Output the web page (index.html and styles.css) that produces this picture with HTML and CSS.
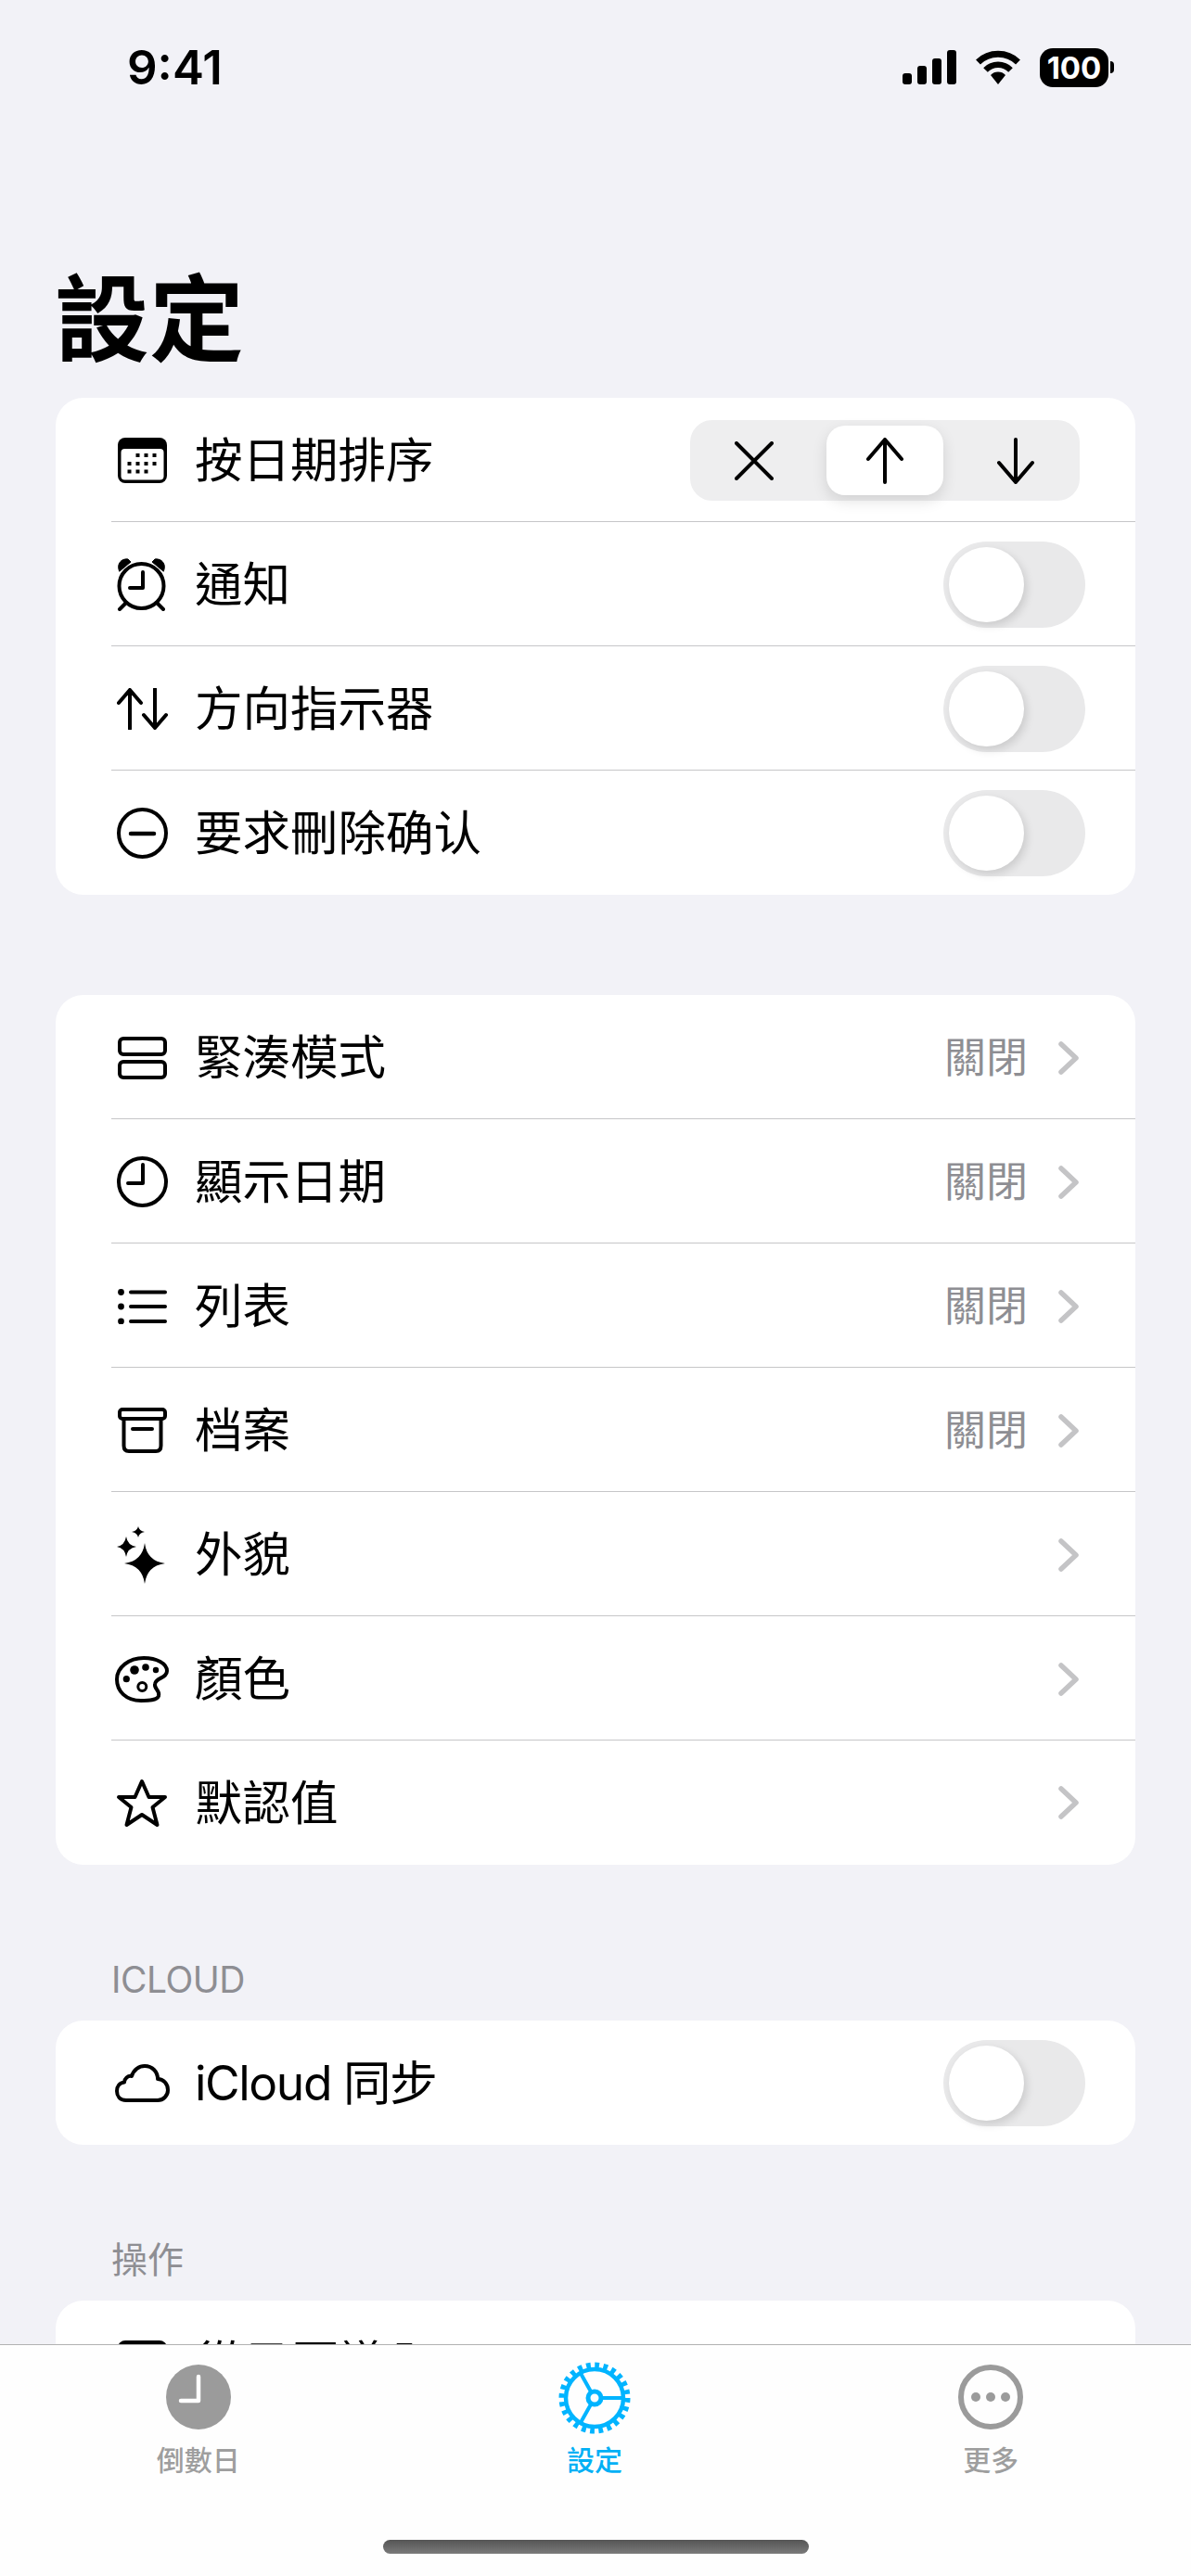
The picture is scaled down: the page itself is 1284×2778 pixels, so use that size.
FILE: index.html
```
<!DOCTYPE html>
<html lang="zh-Hant">
<head>
<meta charset="utf-8">
<title>設定</title>
<link rel="stylesheet" href="styles.css">
</head>
<body>
<div class="screen">
  <div class="viewport">
    <header class="status">
      <span class="time">9:41</span>
      <div class="status-icons">
        <svg class="sig" width="59" height="37" viewBox="0 0 59 37"><rect x="0" y="25" width="10" height="12" rx="3"/><rect x="16" y="17" width="10" height="20" rx="3"/><rect x="32" y="9" width="10" height="28" rx="3"/><rect x="48" y="0" width="10" height="37" rx="3"/></svg>
        <svg class="wifi" width="52" height="37" viewBox="0 0 52 37"><path d="M26 37 18 27A11 11 0 0 1 34 27Z"/><path d="M12.5 21.5A19 19 0 0 1 39.500 21.500" fill="none" stroke="#000" stroke-width="6.500"/><path d="M4.500 13A31 31 0 0 1 47.500 13" fill="none" stroke="#000" stroke-width="7"/></svg>
        <div class="battery"><span class="batt-body">100</span><span class="batt-nub"></span></div>
      </div>
    </header>
    <main class="content">
      <h1 class="title">設定</h1>

      <section class="card">
        <div class="row"><div class="row-in">
          <span class="ico"><svg width="53" height="49" viewBox="0 0 53 49"><rect width="53" height="49" rx="8"/><rect x="3.500" y="12" width="46" height="33.500" rx="4" fill="#fff"/><g><rect x="19.500" y="17" width="4" height="4"/><rect x="28.500" y="17" width="4" height="4"/><rect x="37.500" y="17" width="4" height="4"/><rect x="10.500" y="26" width="4" height="4"/><rect x="19.500" y="26" width="4" height="4"/><rect x="28.500" y="26" width="4" height="4"/><rect x="37.500" y="26" width="4" height="4"/><rect x="10.500" y="34.500" width="4" height="4"/><rect x="19.500" y="34.500" width="4" height="4"/><rect x="28.500" y="34.500" width="4" height="4"/></g></svg></span>
          <span class="label">按日期排序</span>
          <div class="seg">
            <span class="seg-btn"><svg width="42" height="42" viewBox="0 0 42 42" class="line"><path d="M2 2 40 40M40 2 2 40"/></svg></span>
            <span class="seg-btn on"><svg width="40" height="50" viewBox="0 0 40 50" class="line"><path d="M20 48V2M2 23 20 2 38 23"/></svg></span>
            <span class="seg-btn"><svg width="40" height="50" viewBox="0 0 40 50" class="line"><path d="M20 2V48M2 27 20 48 38 27"/></svg></span>
          </div>
        </div></div>
        <div class="row"><div class="row-in">
          <span class="ico"><svg width="54" height="57" viewBox="0 0 54 57" class="line"><circle cx="26.500" cy="30" r="24"/><path d="M28 15V32H14"/><path d="M9 49 3 55M44 49 50 55"/><path d="M2 12C0 5 6 0 12 1L15 4 3 14Z" class="solid"/><path d="M51 12C53 5 47 0 41 1L38 4 50 14Z" class="solid"/></svg></span>
          <span class="label">通知</span>
          <span class="toggle"><span class="knob"></span></span>
        </div></div>
        <div class="row"><div class="row-in">
          <span class="ico"><svg width="55" height="45" viewBox="0 0 55 45" class="line"><path d="M14 44V2M2 16 14 2 26 16M41 1V43M29 29 41 43 53 29"/></svg></span>
          <span class="label">方向指示器</span>
          <span class="toggle"><span class="knob"></span></span>
        </div></div>
        <div class="row"><div class="row-in">
          <span class="ico"><svg width="55" height="55" viewBox="0 0 55 55" class="line"><circle cx="27.500" cy="27.500" r="25.500"/><path d="M15 28H40" class="thick"/></svg></span>
          <span class="label">要求刪除确认</span>
          <span class="toggle"><span class="knob"></span></span>
        </div></div>
      </section>

      <section class="card card-gap">
        <div class="row"><div class="row-in">
          <span class="ico"><svg width="53" height="46" viewBox="0 0 53 46" class="line"><rect x="2" y="2" width="49" height="17" rx="4"/><rect x="2" y="27" width="49" height="17" rx="4"/></svg></span>
          <span class="label">緊湊模式</span>
          <span class="value">關閉</span><svg class="chev" width="22" height="36" viewBox="0 0 22 36"><path d="M3 3 19 18 3 33"/></svg>
        </div></div>
        <div class="row"><div class="row-in">
          <span class="ico"><svg width="55" height="55" viewBox="0 0 55 55" class="line"><circle cx="27.500" cy="27.500" r="25.500"/><path d="M28 9V29H12"/></svg></span>
          <span class="label">顯示日期</span>
          <span class="value">關閉</span><svg class="chev" width="22" height="36" viewBox="0 0 22 36"><path d="M3 3 19 18 3 33"/></svg>
        </div></div>
        <div class="row"><div class="row-in">
          <span class="ico"><svg width="53" height="38" viewBox="0 0 53 38" class="line"><path d="M14 3.500H51M14 19H51M14 35H51"/><circle class="solid none" cx="3.500" cy="3.500" r="3.400"/><circle class="solid none" cx="3.500" cy="19" r="3.400"/><circle class="solid none" cx="3.500" cy="35" r="3.400"/></svg></span>
          <span class="label">列表</span>
          <span class="value">關閉</span><svg class="chev" width="22" height="36" viewBox="0 0 22 36"><path d="M3 3 19 18 3 33"/></svg>
        </div></div>
        <div class="row"><div class="row-in">
          <span class="ico"><svg width="53" height="49" viewBox="0 0 53 49" class="line"><rect x="2" y="2" width="49" height="10" rx="3"/><path d="M6.500 12V41C6.500 45 8.500 47 12 47H41C44.500 47 46.500 45 46.500 41V12M16 23H37"/></svg></span>
          <span class="label">档案</span>
          <span class="value">關閉</span><svg class="chev" width="22" height="36" viewBox="0 0 22 36"><path d="M3 3 19 18 3 33"/></svg>
        </div></div>
        <div class="row"><div class="row-in">
          <span class="ico"><svg width="54" height="62" viewBox="0 0 54 62"><path d="M30 18Q32.500 37.500 52 40 32.500 42.500 30 62 27.500 42.500 8 40 27.500 37.500 30 18Z"/><path d="M10 11Q11.500 20.500 21 22 11.500 23.500 10 33 8.500 23.500 0 22 8.500 20.500 10 11Z"/><path d="M23 0Q24 5 30 6 24 7 23 12 22 7 16 6 22 5 23 0Z"/></svg></span>
          <span class="label">外貌</span>
          <svg class="chev" width="22" height="36" viewBox="0 0 22 36"><path d="M3 3 19 18 3 33"/></svg>
        </div></div>
        <div class="row"><div class="row-in">
          <span class="ico"><svg width="58" height="50" viewBox="0 0 58 50" class="line"><path d="M31 2C45 2 56 8 56 16 56 24 44 23 43 30 42 36 49 37 47 43 45 48 36 48 28 48 12 48 2 38 2 25 2 12 15 2 31 2Z"/><circle class="solid none" cx="21" cy="15" r="4.800"/><circle class="solid none" cx="33" cy="12" r="3.800"/><circle class="solid none" cx="44" cy="15" r="3.200"/><circle class="solid none" cx="12.300" cy="24.700" r="3.600"/><circle cx="29.300" cy="33" r="4.500" class="ring"/></svg></span>
          <span class="label">顏色</span>
          <svg class="chev" width="22" height="36" viewBox="0 0 22 36"><path d="M3 3 19 18 3 33"/></svg>
        </div></div>
        <div class="row"><div class="row-in">
          <span class="ico"><svg width="56" height="53" viewBox="0 0 56 53" class="line"><path d="M28 3 35.500 20H53L39.500 31 44.500 50 28 39 11.500 50 16.500 31 3 20H20.500Z"/></svg></span>
          <span class="label">默認值</span>
          <svg class="chev" width="22" height="36" viewBox="0 0 22 36"><path d="M3 3 19 18 3 33"/></svg>
        </div></div>
      </section>

      <h2 class="sec-head sec-latin">ICLOUD</h2>
      <section class="card">
        <div class="row"><div class="row-in">
          <span class="ico"><svg width="59" height="41" viewBox="0 0 59 41" class="line"><path d="M12 39C5 39 2 34 2 29 2 24 5 20 10 19.500 10 16 14 12 18 13 20 6 26 2 32 2 40 2 46 8 46 16 52 16 57 21 57 28 57 34 52 39 46 39Z"/></svg></span>
          <span class="label label-latin">iCloud 同步</span>
          <span class="toggle"><span class="knob"></span></span>
        </div></div>
      </section>

      <h2 class="sec-head">操作</h2>
      <section class="card">
        <div class="row"><div class="row-in">
          <span class="ico"><svg width="53" height="49" viewBox="0 0 53 49"><rect width="53" height="49" rx="8"/><rect x="3.500" y="12" width="46" height="33.500" rx="4" fill="#fff"/></svg></span>
          <span class="label">從日曆導入</span>
        </div></div>
      </section>
    </main>
  </div>

  <nav class="tabbar">
    <div class="tabs">
      <div class="tab">
        <svg width="70" height="70" viewBox="0 0 70 70"><circle cx="35" cy="35" r="35" fill="#9b9b9b"/><path d="M35 13V39H16" fill="none" stroke="#fff" stroke-width="4.500" stroke-linecap="round" stroke-linejoin="round"/></svg>
        <span class="tab-label">倒數日</span>
      </div>
      <div class="tab active">
        <svg width="78" height="78" viewBox="0 0 78 78" fill="none" stroke="#00b4ff"><circle cx="39" cy="39" r="35.500" stroke-width="6" stroke-dasharray="4.800 4.494"/><circle cx="39" cy="39" r="31" stroke-width="4.500"/><circle cx="39" cy="39" r="7" stroke-width="5"/><path d="M46 39H70M35.500 33 24 12.500M35.500 45 24 65.500" stroke-width="4"/></svg>
        <span class="tab-label">設定</span>
      </div>
      <div class="tab">
        <svg width="70" height="70" viewBox="0 0 70 70"><circle cx="35" cy="35" r="32" fill="none" stroke="#9b9b9b" stroke-width="6"/><circle cx="19" cy="35" r="5" fill="#9b9b9b"/><circle cx="35" cy="35" r="5" fill="#9b9b9b"/><circle cx="51" cy="35" r="5" fill="#9b9b9b"/></svg>
        <span class="tab-label">更多</span>
      </div>
    </div>
    <div class="home"></div>
  </nav>
</div>
</body>
</html>
```

FILE: styles.css
```
* { box-sizing: border-box; }
html, body { margin: 0; padding: 0; }
body {
  background: #f2f2f7;
  font-family: Inter, "Noto Sans CJK TC", sans-serif;
  color: #000;
}
.screen {
  width: 1284px;
  height: 2778px;
  display: flex;
  flex-direction: column;
  overflow: hidden;
}
.viewport {
  flex: 1;
  min-height: 0;
  overflow: hidden;
}
.status {
  height: 110px;
  padding: 52px 83px 0 137px;
  display: flex;
  justify-content: space-between;
  align-items: flex-start;
}
.time {
  font-size: 51px;
  line-height: 42px;
  font-weight: 600;
}
.status-icons {
  display: flex;
  align-items: center;
  gap: 18px;
  height: 41px;
}
.sig, .wifi { display: block; }
.battery {
  display: flex;
  align-items: center;
  gap: 2px;
  margin-left: 1px;
}
.batt-body {
  width: 74px;
  height: 42px;
  border-radius: 14px;
  background: #000;
  color: #fff;
  font-size: 33px;
  font-weight: 700;
  line-height: 42px;
  text-align: center;
}
.batt-nub {
  width: 4px;
  height: 13px;
  background: #000;
  border-radius: 0 6px 6px 0;
}
.content { padding: 0 60px; }
.title {
  margin: 175px 0 24px -1px;
  height: 120px;
  font-size: 102px;
  line-height: 120px;
  font-weight: 700;
}
.card {
  background: #fff;
  border-radius: 30px;
  overflow: hidden;
}
.card-gap { margin-top: 108px; }
.row { padding-left: 60px; }
.row-in {
  height: 134px;
  display: flex;
  align-items: center;
  padding: 2px 54px 0 0;
  border-bottom: 1px solid #c6c6c8;
}
.row:last-child .row-in { border-bottom: 0; padding-top: 0; }
.row:not(:last-child) .label { margin-bottom: 2px; }
.ico {
  width: 66px;
  flex: none;
  display: flex;
  justify-content: center;
  align-items: center;
  margin-right: 24px;
}
.ico svg { display: block; }
.line {
  fill: none;
  stroke: #000;
  stroke-width: 4;
  stroke-linecap: round;
  stroke-linejoin: round;
}
.line .solid { fill: #000; stroke: #000; stroke-width: 1; }
.line .none { stroke: none; }
.line .thick { stroke-width: 4.500; }
.line .ring { stroke-width: 3; }
.label {
  flex: 1;
  font-size: 51.500px;
  line-height: 60px;
}
.label-latin { letter-spacing: -1.400px; }
.value {
  font-size: 45px;
  line-height: 60px;
  color: #8e8e93;
  margin-right: 33px;
}
.chev {
  display: block;
  fill: none;
  stroke: #c4c4c6;
  stroke-width: 5.500;
  stroke-linecap: round;
  stroke-linejoin: round;
  margin-right: 7px;
}
.toggle {
  width: 153px;
  height: 93px;
  padding: 6px;
  border-radius: 47px;
  background: #e9e9ea;
  flex: none;
}
.knob {
  display: block;
  width: 81px;
  height: 81px;
  border-radius: 50%;
  background: #fff;
  box-shadow: 3px 4px 10px rgba(0, 0, 0, .13);
}
.seg {
  display: flex;
  gap: 15px;
  padding: 6px;
  height: 87px;
  margin-right: 6px;
  border-radius: 24px;
  background: #eeeeef;
}
.seg-btn {
  width: 126px;
  height: 75px;
  display: flex;
  align-items: center;
  justify-content: center;
  border-radius: 20px;
}
.seg-btn.on {
  background: #fff;
  box-shadow: 0 6px 16px rgba(0, 0, 0, .12);
}
.sec-head {
  margin: 100px 0 20px 60px;
  font-size: 39px;
  line-height: 48px;
  font-weight: 400;
  color: #8e8e93;
}
.sec-latin { letter-spacing: -.5px; }
.tabbar {
  flex: none;
  height: 250px;
  background: #fefefe;
  border-top: 1px solid #b2b2b2;
  padding-top: 18px;
  display: flex;
  flex-direction: column;
}
.tabs {
  display: grid;
  grid-template-columns: repeat(3, 1fr);
  height: 192px;
  padding-right: 2px;
}
.tab {
  display: flex;
  flex-direction: column;
  align-items: center;
  height: 124px;
  justify-content: space-between;
}
.tab svg { display: block; }
.tab:not(.active) svg { margin-top: 3px; }
.tab-label {
  font-size: 30px;
  line-height: 36px;
  font-weight: 500;
  color: #9e9e9e;
}
.tab.active .tab-label { color: #00b0f5; }
.home {
  width: 459px;
  height: 15px;
  border-radius: 8px;
  margin: 0 auto;
  background: linear-gradient(#555, #7a7a7a);
}
```
